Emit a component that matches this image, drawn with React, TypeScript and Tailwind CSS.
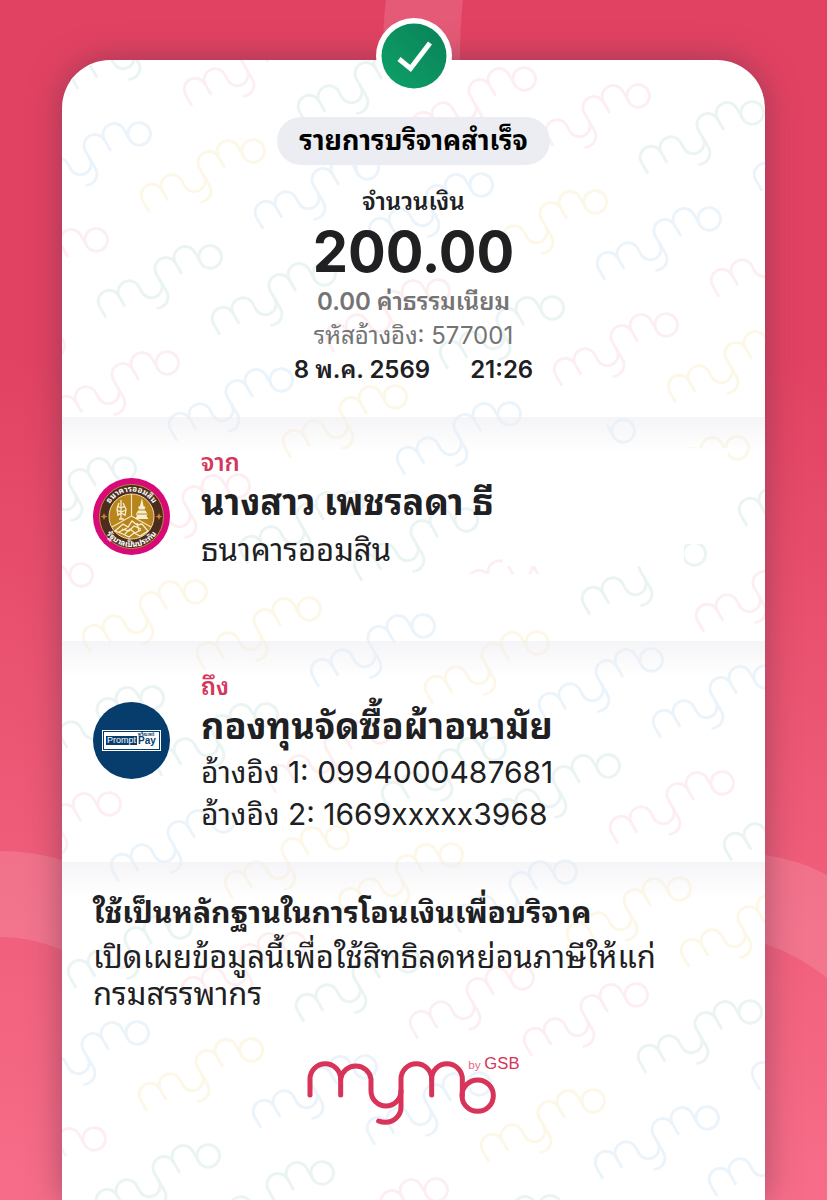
import type { ReactNode } from 'react';

const watermarkColors: Record<string, string> = {
    g: '#eaf4f3',
    p: '#fdeff1',
    b: '#ebf4fb',
    y: '#fdf7e8',
};

// One string per row, the first letter is column -3.
const watermarkRows = [
    'gpgppgbgg',
    'bybbybppp',
    'pggpgpygg',
    'ppbybbygg',
    'ggpggpgpp',
    'ppyybybbb',
    'ggggpggpg',
    'pppbyybyy',
    'gpgppgbpg',
    'bybbybbyb',
    'pggpgpgpg',
];

function WordmarkShape() {
    return (
        <>
            <path d="M60 168V120a46 46 0 0 1 92 0v48" />
            <path d="M152 120a46 46 0 0 1 91 0v35a45 46 0 0 0 90 0" />
            <path d="M266 246q9 4 21 4a46 46 0 0 0 46-46v-84a46 46 0 0 1 92 0v48" />
            <path d="M425 120a46 46 0 0 1 92 0v50" />
            <circle cx="563" cy="170" r="47" />
        </>
    );
}

function Watermark() {
    return (
        <svg className="pointer-events-none absolute top-0 left-0 -z-10 h-full w-full" fill="none" aria-hidden="true">
            <defs>
                <g id="wordmark" strokeWidth="12" strokeLinecap="round">
                    <WordmarkShape />
                </g>
            </defs>
            {watermarkRows.map((row, r) =>
                row.split('').map((key, i) => {
                    // rows wrap with a three column shift after the eighth
                    const col = r < 8 ? i - 3 : i;
                    const x = 462 + col * 114 - r * 43;
                    const y = 19 + col * 17 + r * 106;
                    return (
                        <use
                            key={`${r}-${i}`}
                            href="#wordmark"
                            stroke={watermarkColors[key]}
                            transform={`translate(${x} ${y}) rotate(-30) scale(0.24) translate(-562 -170)`}
                        />
                    );
                }),
            )}
            {/* keep the area around the sender clear */}
            <g fill="#fff">
                <rect x="462" y="355" width="83" height="35" />
                <rect x="432" y="388" width="234" height="96" />
                <rect x="441" y="480" width="149" height="26" />
                <rect x="400" y="514" width="108" height="34" />
                <rect x="590" y="480" width="32" height="42" />
            </g>
        </svg>
    );
}

function Backdrop() {
    return (
        <svg
            className="absolute inset-0 -z-10 h-full w-full"
            viewBox="0 0 827 1200"
            preserveAspectRatio="xMidYMin slice"
            fill="#fff"
            fillOpacity="0.13"
            aria-hidden="true"
        >
            <path d="M386 0Q383 22 383 60H460Q460 25 463 0Z" />
            <path d="M0 851Q32 851 62 860H80V955L62 950Q32 937 0 937Z" />
            <path d="M750 852L765 855Q800 860 827 875V978Q797 954 765 944L750 940Z" />
        </svg>
    );
}

function GsbLogo() {
    return (
        <svg className="mt-[31px] size-[77px] shrink-0" viewBox="0 0 77 77" role="img" aria-label="GSB">
            <circle cx="38.5" cy="38.5" r="38.5" fill="#d80a78" />
            <circle cx="38.5" cy="38.5" r="32" fill="#4b2c1d" stroke="#c08a3a" />
            <circle cx="38.5" cy="38.5" r="22.5" fill="#b8851d" stroke="#ecd9a4" />
            <path d="M38.5 16V38L19 49M38.5 38L58 49" stroke="#f4e6bd" strokeWidth="1.2" fill="none" />
            <g stroke="#f8efd2" fill="none" strokeWidth="1.3">
                <path d="M28 22v19M26 25l-2 6 1 7M30 25l3 6-1 7M24 28l4 2 4-2M24 32l4 2 5-2M25 37l3-2 4 2M26 41h5" />
                <path d="M22 53l8-7 5 3 4-6 5 4 5-1 6 7-8 5-6-3-5 4-6-3zM29 51l7 2 5-5 7 3M32 56l5-5 5 4 6-3M26 54l8-4M44 45l2 8" />
            </g>
            <path d="M49 20l1.5 8 2 1-1 2 3 5-1 2 2 3H42l2-3-1-2 3-5-1-2 2-1z" fill="#f8efd2" />
            <path d="M45 32h8M44 36h10" stroke="#b8851d" />
            <path d="M11 35l1 2.5 2.5 1-2.5 1-1 2.5-1-2.5-2.5-1 2.5-1zM66 35l1 2.5 2.5 1-2.5 1-1 2.5-1-2.5-2.5-1 2.5-1z" fill="#c08a3a" />
            <path id="seal-top" d="M13.5 38.5a25 25 0 0 1 50 0" fill="none" />
            <path id="seal-bottom" d="M8 38.5a30.5 30.5 0 0 0 61 0" fill="none" />
            <g fill="#fff" fontSize="8" fontWeight="700" textAnchor="middle">
                <text>
                    <textPath href="#seal-top" startOffset="50%">ธนาคารออมสิน</textPath>
                </text>
                <text>
                    <textPath href="#seal-bottom" startOffset="50%">รัฐบาลเป็นประกัน</textPath>
                </text>
            </g>
        </svg>
    );
}

function PromptPayLogo() {
    return (
        <svg className="mt-[31px] size-[77px] shrink-0" viewBox="0 0 77 77" role="img" aria-label="PromptPay">
            <circle cx="38.5" cy="38.5" r="38.5" fill="#063d6c" />
            <rect x="9" y="28" width="59" height="21" fill="#fff" />
            <rect x="10.5" y="29.5" width="56" height="18" fill="none" stroke="#063d6c" />
            <rect x="13" y="34" width="31" height="9" fill="#063d6c" />
            <g fontFamily="Liberation Sans, sans-serif">
                <text x="14" y="41" fontSize="9" fill="#fff">Prompt</text>
                <text x="45" y="42" fontSize="10" fontWeight="700" fill="#063d6c">Pay</text>
                <text x="45" y="34" fontSize="4" fontWeight="700" fill="#063d6c">พร้อมเพย์</text>
            </g>
        </svg>
    );
}

function Party({ label, name, logo, children }: { label: string; name: string; logo: ReactNode; children: ReactNode }) {
    return (
        <section className="flex gap-[31px] bg-linear-to-b from-[#ececf188] to-transparent to-[36px] px-[31px] pt-[30px]">
            {logo}
            <div className="min-w-0 text-[30px] leading-[42px]">
                <p className="text-[24px] leading-8 font-semibold text-[#d4375c]">{label}</p>
                <h2 className="mb-0.5 text-[36px] leading-[46px] font-bold">{name}</h2>
                {children}
            </div>
        </section>
    );
}

export default function App() {
    return (
        <main className="relative isolate min-h-screen overflow-hidden bg-linear-to-b from-[#e24262] from-30% to-[#f76d89] px-[62px] pt-[60px] font-[Inter,'Noto_Sans_Thai_Looped','Noto_Looped_Thai',Loma,Waree,Garuda,sans-serif] text-[#202022]">
            <Backdrop />
            <article className="relative isolate min-h-[1140px] rounded-t-[48px] bg-white shadow-[0_0_32px_rgba(90,50,70,0.5)]">
                <div className="absolute inset-0 -z-10 overflow-hidden rounded-t-[48px]">
                    <Watermark />
                </div>

                <svg className="absolute -top-[42px] left-1/2 size-[76px] -translate-x-1/2" viewBox="0 0 76 76" role="img" aria-label="Success">
                    <linearGradient id="badge" x1="1" y1="0" x2="0" y2="1">
                        <stop stopColor="#0a8158" />
                        <stop offset="1" stopColor="#0ea168" />
                    </linearGradient>
                    <circle cx="38" cy="38" r="38" fill="#fff" />
                    <circle cx="38" cy="38" r="32.5" fill="url(#badge)" />
                    <path d="M23 41l11.5 9.500L54 25" stroke="#fff" strokeWidth="5" fill="none" />
                </svg>

                <header className="flex flex-col items-center pt-[57px] pb-[30px] text-center text-[24px] leading-[34px]">
                    <h1 className="mb-5 rounded-full bg-[#ecedf2] px-[22px] text-[27px] leading-[48px] font-bold text-black">รายการบริจาคสำเร็จ</h1>
                    <p className="font-semibold">จำนวนเงิน</p>
                    <p className="text-[56px] leading-[66px] font-bold">200.00</p>
                    <p className="font-semibold text-[#747474]">0.00 ค่าธรรมเนียม</p>
                    <p className="text-[#747474]">รหัสอ้างอิง: 577001</p>
                    <p className="flex gap-10 font-semibold">
                        <span>8 พ.ค. 2569</span>
                        <time>21:26</time>
                    </p>
                </header>

                <div className="flex flex-col">
                    <div className="min-h-[224px]">
                        <Party label="จาก" name="นางสาว เพชรลดา ธี" logo={<GsbLogo />}>
                            <p className="text-[31px] leading-[46px]">ธนาคารออมสิน</p>
                        </Party>
                    </div>
                    <div className="min-h-[221px]">
                        <Party label="ถึง" name="กองทุนจัดซื้อผ้าอนามัย" logo={<PromptPayLogo />}>
                            <p>อ้างอิง 1: 0994000487681</p>
                            <p>อ้างอิง 2: 1669xxxxx3968</p>
                        </Party>
                    </div>
                </div>

                <section className="bg-linear-to-b from-[#ececf188] to-transparent to-[36px] px-[31px] pt-[26px] text-[31px] leading-[37px]">
                    <h2 className="mb-0.5 text-[30px] leading-[48px] font-bold">ใช้เป็นหลักฐานในการโอนเงินเพื่อบริจาค</h2>
                    <p>เปิดเผยข้อมูลนี้เพื่อใช้สิทธิลดหย่อนภาษีให้แก่</p>
                    <p>กรมสรรพากร</p>
                </section>

                <footer className="flex justify-center pt-[43px]">
                    <svg className="h-[72px] w-[214px]" viewBox="51 48 642 216" role="img" aria-label="mymo by GSB">
                        <g fill="none" stroke="#d83358" strokeWidth="15" strokeLinecap="round">
                            <WordmarkShape />
                        </g>
                        <g fill="#d83358" fontFamily="Liberation Sans, sans-serif">
                            <text x="535" y="89" fontSize="35" opacity="0.75">by</text>
                            <text x="583" y="89" fontSize="50">GSB</text>
                        </g>
                    </svg>
                </footer>
            </article>
        </main>
    );
}
